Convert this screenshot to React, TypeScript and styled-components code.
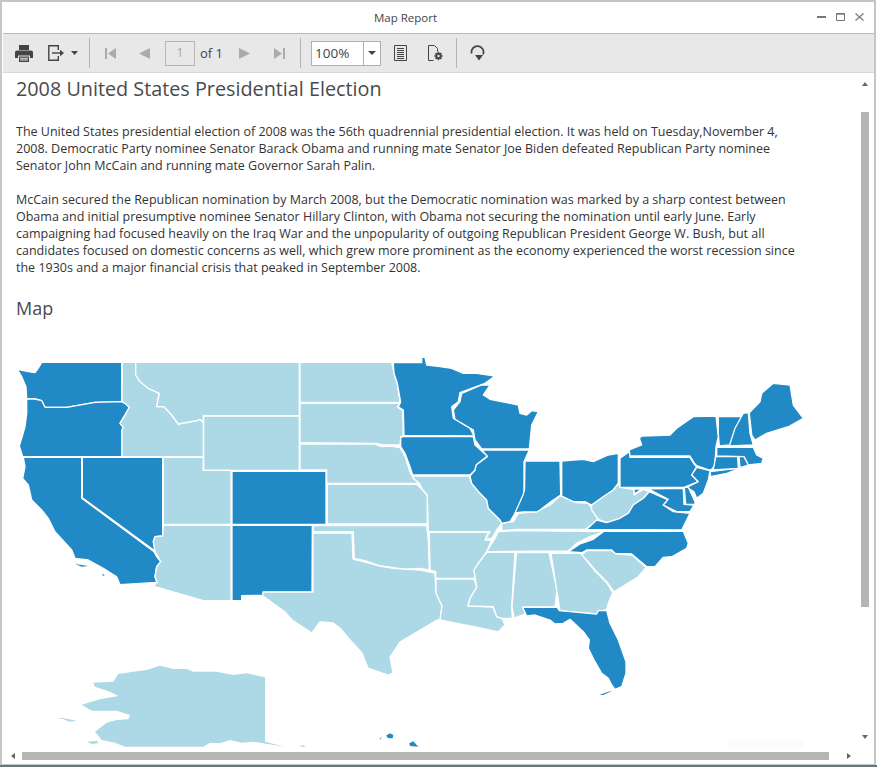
import React from "react";
import styled, { createGlobalStyle } from "styled-components";

const Global = createGlobalStyle`
  html, body { margin: 0; padding: 0; background: #fff; }
  body { font-family: "Open Sans", "Liberation Sans", sans-serif; }
`;

const BLUE = "#2289c7";
const LIGHT = "#add8e6";

const Win = styled.div`
  width: 876px;
  height: 765px;
  box-sizing: border-box;
  background: #fff;
  border: 2px solid #c6c6c6;
  border-bottom-width: 1px;
  padding-left: 1px;
  display: flex;
  flex-direction: column;
  overflow: hidden;
`;
const DesktopStrip = styled.div`
  height: 2px;
  background: #66767c;
`;
const TitleBar = styled.div`
  height: 31px;
  flex: none;
  display: flex;
  align-items: center;
  justify-content: center;
  position: relative;
  font-size: 11.5px;
  color: #444;
  padding-right: 66px;
  box-sizing: border-box;
`;
const WinControls = styled.div`
  position: absolute;
  right: 10px;
  top: 11px;
  display: flex;
  gap: 10px;
  align-items: center;
`;
const Toolbar = styled.div`
  height: 40px;
  flex: none;
  box-sizing: border-box;
  background: #e8e8e8;
  border-top: 1px solid #b9b9b9;
  border-bottom: 1px solid #d8d8d8;
  display: flex;
  align-items: center;
  padding-left: 4px;
`;
const ToolButton = styled.div<{ $w?: number; $ml?: number }>`
  width: ${(p) => p.$w ?? 34}px;
  margin-left: ${(p) => p.$ml ?? 0}px;
  height: 30px;
  flex: none;
  display: flex;
  align-items: center;
  justify-content: center;
  gap: 7px;
`;
const Separator = styled.div<{ $ml: number }>`
  width: 1px;
  height: 30px;
  background: #b4b4b4;
  margin-left: ${(p) => p.$ml}px;
  flex: none;
`;
const PageInput = styled.div`
  width: 30px;
  height: 25px;
  margin-left: 4px;
  box-sizing: border-box;
  border: 1px solid #b5b5b5;
  flex: none;
  display: flex;
  align-items: center;
  justify-content: center;
  font-size: 13px;
  color: #a8a8a8;
  padding-bottom: 3px;
`;
const OfLabel = styled.div`
  margin-left: 5px;
  width: 27px;
  flex: none;
  font-size: 13px;
  color: #444;
  white-space: nowrap;
`;
const ZoomCombo = styled.div`
  width: 70px;
  height: 25px;
  margin-left: 10px;
  box-sizing: border-box;
  border: 1px solid #b0b0b0;
  background: #fff;
  flex: none;
  display: flex;
  align-items: stretch;
`;
const ZoomValue = styled.div`
  flex: 1;
  font-size: 13.5px;
  color: #444;
  padding-left: 3px;
  line-height: 23px;
`;
const ZoomDrop = styled.div`
  width: 16px;
  border-left: 1px solid #b0b0b0;
  display: flex;
  align-items: center;
  justify-content: center;
`;
const Body = styled.div`
  flex: 1;
  min-height: 0;
  display: grid;
  grid-template-columns: 1fr 17px;
  grid-template-rows: 1fr 14px;
`;
const Viewport = styled.div`
  overflow: hidden;
  min-width: 0;
  min-height: 0;
  padding-left: 13px;
`;
const ReportTitle = styled.h1`
  margin: 2px 0 0;
  font-weight: 400;
  font-size: 19.8px;
  line-height: 28px;
  color: #4a4a4a;
  white-space: nowrap;
`;
const Paragraphs = styled.div`
  margin-top: 20px;
  font-size: 12.5px;
  line-height: 17px;
  color: #333;
`;
const Para = styled.div`
  margin-bottom: 17px;
`;
const Line = styled.div`
  white-space: nowrap;
`;
const SectionTitle = styled.h2`
  margin: 19px 0 0;
  font-weight: 400;
  font-size: 18px;
  line-height: 26px;
  color: #4a4a4a;
`;
const MapSvg = styled.svg`
  display: block;
  margin: 1px 0 0 -13px;
`;
const VScroll = styled.div`
  display: flex;
  flex-direction: column;
  align-items: center;
  padding-right: 1px;
`;
const VThumb = styled.div`
  width: 8px;
  height: 495px;
  background: #b5b5b5;
  margin-top: 28px;
`;
const ArrowUp = styled.div`
  margin-top: 7px;
  height: 4px;
  line-height: 0;
`;
const ArrowDown = styled.div`
  margin-top: auto;
  margin-bottom: 11px;
  line-height: 0;
`;
const HScroll = styled.div`
  display: flex;
  align-items: center;
  padding: 0 0 2px 8px;
`;
const HThumb = styled.div`
  width: 807px;
  height: 8px;
  background: #b5b5b5;
  margin-left: 7px;
`;
const ArrowRight = styled.div`
  margin-left: 18px;
  line-height: 0;
`;
const Corner = styled.div``;

type S = { f: string; o?: [number, number]; p: string };
const Z4: [number, number] = [0, 350];
const Z5: [number, number] = [270, 350];
const Z6: [number, number] = [540, 370];
const Z7: [number, number] = [0, 620];
const ZFL: [number, number] = [500, 590];
const ZKY: [number, number] = [470, 490];

const states: S[] = [
  { f: BLUE, o: Z4, p: "125,37 118,50 105,68 85,65 52,58 65,80 78,110 80,147 105,147 125,152 135,172 160,172 200,172 285,157 365,155 365,37" },
  { f: BLUE, o: Z4, p: "80,147 105,147 125,152 135,172 200,172 285,157 365,155 375,160 388,172 378,190 360,220 370,232 366,240 366,320 68,320 58,288 65,265 75,230 80,190" },
  { f: LIGHT, o: Z4, p: "367,37 407,37 407,75 420,95 445,115 478,130 470,170 492,170 515,195 535,222 590,212 600,208 610,218 610,320 366,320 366,240 370,232 360,220 378,190 388,172 375,160 366,155" },
  { f: LIGHT, o: Z4, p: "407,37 898,37 898,197 610,197 610,218 600,208 590,212 535,222 515,195 492,170 470,170 478,130 445,115 420,95 407,75" },
  { f: LIGHT, o: Z4, p: "611,198 898,198 898,361 611,361" },
  { f: LIGHT, o: Z4, p: "490,322 610,322 610,361 693,361 693,523 490,523" },
  { f: BLUE, o: Z4, p: "247,322 488,322 488,558 465,560 460,575 465,603 247,443" },
  { f: BLUE, o: Z4, p: "70,322 245,322 245,445 462,605 470,620 482,635 470,650 465,680 470,697 360,704 350,680 310,655 265,630 225,625 215,600 165,545 145,505 125,480 95,450 85,405 68,385 75,350" },
  { f: LIGHT, o: Z4, p: "490,526 693,526 693,752 610,752 460,708 472,697 465,680 470,650 482,635 465,603 460,575 465,560 488,558" },
  { f: BLUE, o: Z4, p: "696,526 937,526 936,727 790,727 790,736 725,737 725,752 696,752" },
  { f: BLUE, o: Z4, p: "696,364 978,364 978,523 696,523" },
  { f: LIGHT, o: Z5, p: "90,37 365,37 372,70 382,100 390,157 90,157" },
  { f: LIGHT, o: Z5, p: "90,160 390,160 382,172 398,182 400,255 392,262 390,285 365,285 340,285 315,280 90,278" },
  { f: LIGHT, o: Z5, p: "90,282 312,282 335,290 362,288 390,293 405,320 420,365 430,385 448,400 170,400 170,360 90,360" },
  { f: LIGHT, o: Z5, p: "172,403 440,403 458,420 472,437 472,522 172,522" },
  { f: LIGHT, o: Z5, p: "130,527 470,527 475,570 478,660 450,655 400,658 365,652 330,648 285,632 253,625 250,545 130,545" },
  { f: LIGHT, p: "313,533 352,533 353,559 365,562 380,566 392,568 403,569 420,570 435,573 436,593 442,606 440,620 437,620 400,642 390,657 393,673 388,675 368,668 362,653 350,640 340,628 333,623 320,622 312,633 292,620 285,612 263,596 263,592 313,592" },
  { f: LIGHT, o: Z5, p: "430,378 598,378 605,400 630,430 650,450 655,475 690,510 695,520 680,540 665,565 645,568 660,545 475,545 472,435 458,420 448,400 430,385" },
  { f: LIGHT, o: Z5, p: "478,547 655,547 645,570 665,570 650,605 625,640 612,660 615,685 497,685 497,665 480,660" },
  { f: LIGHT, p: "436,579 474,579 477,587 470,598 468,606 493,607 497,617 502,618 505,625 498,632 480,628 465,625 440,620 442,606 436,593" },
  { f: LIGHT, o: Z5, p: "650,607 735,607 725,770 727,805 695,805 680,800 670,770 595,768 600,745 620,712 612,660 625,640" },
  { f: LIGHT, p: "516.5,552.5 549,552.5 557,590 555,607 523,607 525,614 514,618 512,606" },
  { f: LIGHT, o: ZKY, p: "85,125 140,122 405,125 360,140 320,160 295,183 50,185 65,160 75,145" },
  { f: LIGHT, o: ZKY, p: "95,100 130,95 145,70 200,65 240,45 270,18 320,38 355,40 365,55 385,90 345,118 140,118 95,122" },
  { f: BLUE, o: Z5, p: "640,300 778,300 762,335 762,430 748,470 735,490 720,515 695,520 690,510 655,475 650,450 630,430 605,400 600,378 615,360 618,345 652,320 635,300" },
  { f: BLUE, p: "525,461 560,461 560.7,495 551.7,501 540,510 536.7,512 523,512 515,513 523,495 524.5,490" },
  { f: BLUE, o: Z5, p: "400,260 610,260 615,285 652,318 618,345 615,360 600,375 428,375 420,350 405,310 392,290 392,262" },
  { f: BLUE, o: Z5, p: "370,38 455,38 455,22 465,22 470,45 510,50 545,55 580,70 620,70 675,78 645,100 570,128 565,155 545,170 550,205 600,235 612,258 402,256 400,180 385,170 392,157 382,100 372,70" },
  { f: BLUE, o: Z5, p: "635,105 660,105 640,135 660,148 745,165 750,190 770,195 785,182 805,185 785,225 778,297 635,297 615,270 610,240 555,208 550,180 570,155 575,130" },
  { f: BLUE, o: Z6, p: "65,273 130,268 160,275 205,255 235,250 235,340 220,360 190,380 155,405 135,395 100,395 65,378" },
  { f: LIGHT, o: Z6, p: "235,340 240,352 280,358 283,375 310,358 328,365 310,385 280,405 265,430 240,445 200,458 175,448 155,420 155,405 190,380 220,360" },
  { f: BLUE, o: Z6, p: "170,450 200,458 240,445 265,430 280,405 310,385 328,365 350,375 385,390 370,405 400,425 450,430 425,480 140,478" },
  { f: BLUE, o: Z6, p: "192,484 430,484 445,520 440,535 395,560 370,562 345,590 320,590 275,552 225,550 215,540 140,540 125,548 85,545 120,522 160,508" },
  { f: LIGHT, o: Z6, p: "122,557 140,542 215,542 228,552 275,555 318,592 295,620 222,665 200,635 165,600 140,570" },
  { f: LIGHT, o: Z6, p: "33,550 122,550 140,572 165,603 200,638 218,668 205,700 200,718 178,725 172,735 60,722 50,660" },
  { f: BLUE, o: ZFL, p: "68,52 172,52 178,62 290,72 295,62 320,62 330,100 355,150 378,215 378,250 365,290 345,298 335,285 325,265 305,250 285,215 265,175 268,150 250,125 210,88 190,100 165,102 150,90 105,75 80,78" },
  { f: BLUE, o: Z6, p: "240,352 240,265 268,245 270,262 450,262 462,282 470,290 455,315 475,335 432,352" },
  { f: BLUE, o: Z6, p: "270,258 268,240 305,225 298,205 305,198 390,195 410,175 460,140 528,138 535,200 528,230 525,285 515,298 508,300 470,287 462,278 450,258" },
  { f: BLUE, o: Z6, p: "510,305 590,295 600,295 560,310 512,320" },
  { f: BLUE, o: Z6, p: "470,292 510,302 505,330 490,370 470,385 462,365 440,352 475,335 455,315" },
  { f: BLUE, o: Z6, p: "433,352 445,352 465,395 465,403 437,403" },
  { f: BLUE, o: Z6, p: "282,357 430,355 432,403 462,405 450,425 410,425 370,405 385,388 350,370 328,358 310,355 283,372" },
  { f: BLUE, o: Z6, p: "535,140 608,140 590,175 570,225 538,228 535,190" },
  { f: BLUE, o: Z6, p: "610,130 625,128 630,190 640,225 568,228 585,175" },
  { f: BLUE, o: Z6, p: "628,128 660,95 665,70 700,40 750,45 760,105 790,145 745,170 680,190 645,210 635,195" },
  { f: BLUE, o: Z6, p: "530,232 640,232 650,255 670,265 665,280 625,285 612,260 530,258" },
  { f: BLUE, o: Z6, p: "527,260 593,260 595,295 520,300" },
  { f: BLUE, o: Z6, p: "597,260 612,260 625,285 600,293" },
];

const unstroked: S[] = [
  { f: LIGHT, o: Z7, p: "795,172 740,160 700,165 650,155 580,155 560,147 520,147 480,137 440,150 400,155 355,162 340,185 280,188 285,200 330,215 355,228 300,238 245,254 275,272 350,272 390,285 385,298 350,300 320,308 285,335 305,360 345,368 375,380 610,380 630,368 660,370 690,360 725,368 760,365 855,380 795,365" },
  { f: LIGHT, o: Z7, p: "168,293 190,295 230,302 210,305 190,298" },
  { f: LIGHT, o: Z7, p: "262,365 290,362 295,370 275,372" },
  { f: LIGHT, o: Z7, p: "898,380 910,375 917,380" },
  { f: BLUE, o: Z7, p: "1158,347 1170,340 1180,345 1178,355 1165,355" },
  { f: BLUE, o: Z7, p: "1138,358 1145,350 1142,358" },
  { f: BLUE, o: Z7, p: "1228,370 1240,364 1255,380 1230,378" },
  { f: BLUE, o: ZFL, p: "298,315 325,305 338,302 310,315" },
  { f: BLUE, o: Z4, p: "225,642 245,645 265,648 245,650" },
  { f: BLUE, o: Z4, p: "305,672 315,675 310,678" },
];

const toPoints = (s: S) => {
  const [ox, oy] = s.o ?? [0, 0];
  const k = s.o ? 3 : 1;
  return s.p
    .split(" ")
    .map((pt) => {
      const [x, y] = pt.split(",").map(Number);
      return `${(ox + x / k).toFixed(1)},${(oy + y / k).toFixed(1)}`;
    })
    .join(" ");
};

const USMap = () => (
  <MapSvg width={857} height={426} viewBox="3 322 857 426">
    <rect x={729} y={740} width={75} height={7} fill="#fbfbfb" />
    {states.map((s, i) => (
      <polygon key={i} points={toPoints(s)} fill={s.f} stroke="#fff" strokeWidth={1.3} strokeLinejoin="round" />
    ))}
    {unstroked.map((s, i) => (
      <polygon key={i} points={toPoints(s)} fill={s.f} />
    ))}
  </MapSvg>
);

const DARK = "#444";
const DIS = "#ababab";

const Printer = () => (
  <svg width="18" height="17" viewBox="0 0 18 17">
    <path fill={DARK} d="M4 0h10v5H4zM2 5.5h14a2 2 0 0 1 2 2V13h-3v-2.5H3V13H0V7.5a2 2 0 0 1 2-2z" />
    <path fill={DARK} d="M4 11.5h10V17H4z" />
    <path fill="#e8e8e8" d="M5 12.8h8v1H5zM5 14.6h8v1H5z" />
  </svg>
);
const ExportIcon = () => (
  <svg width="16" height="16" viewBox="0 0 16 16" fill="none" stroke={DARK} strokeWidth="1.4">
    <path d="M10.3 5V.8H.8v14.4h9.5V11" />
    <path d="M4 8h9" />
    <path fill={DARK} stroke="none" d="M12 4.8 16 8l-4 3.2z" />
  </svg>
);
const Caret = () => (
  <svg width="7" height="4" viewBox="0 0 7 4"><path fill={DARK} d="M0 0h7L3.5 4z" /></svg>
);
const First = () => (
  <svg width="11" height="11" viewBox="0 0 11 11">
    <path fill={DIS} d="M0 0h2v11H0zM11 0v11L3 5.5z" />
  </svg>
);
const Prev = () => (
  <svg width="11" height="11" viewBox="0 0 11 11"><path fill={DIS} d="M11 0v11L0 5.5z" /></svg>
);
const Next = () => (
  <svg width="11" height="11" viewBox="0 0 11 11"><path fill={DIS} d="M0 0v11l11-5.5z" /></svg>
);
const Last = () => (
  <svg width="11" height="11" viewBox="0 0 11 11">
    <path fill={DIS} d="M9 0h2v11H9zM0 0v11l8-5.5z" />
  </svg>
);
const PageList = () => (
  <svg width="13" height="16" viewBox="0 0 13 16" fill="none" stroke={DARK}>
    <path d="M.5.5h12v15H.5z" />
    <path d="M3 3.5h7M3 5.5h7M3 7.5h7M3 9.5h7M3 11.5h7M3 13.5h7" />
  </svg>
);
const PageGear = () => (
  <svg width="15" height="16" viewBox="0 0 15 16" fill="none" stroke={DARK}>
    <path d="M5.5 15.5h-5V.5h6l3 3v3" />
    <circle cx="10.5" cy="11" r="2.2" strokeWidth="2" />
    <path strokeWidth="1.4" d="M10.5 6.8v1.4M10.5 13.8v1.4M6.3 11h1.4M13.3 11h1.4M7.6 8.1l1 1M12.4 12.9l1 1M7.6 13.9l1-1M12.4 9.1l1-1" />
  </svg>
);
const Refresh = () => (
  <svg width="15" height="16" viewBox="0 0 15 16" fill="none">
    <path stroke={DARK} strokeWidth="1.7" d="M1.7 8.5A6 6 0 1 1 13 9.5" />
    <path fill={DARK} d="M5 10h8l-4 5.5z" />
  </svg>
);
const TriDown = () => (
  <svg width="8" height="4" viewBox="0 0 8 4"><path fill={DARK} d="M0 0h8L4 4z" /></svg>
);

const Tri = ({ d, c = "#666", w = 6, h = 4 }: { d: string; c?: string; w?: number; h?: number }) => (
  <svg width={w} height={h} viewBox={`0 0 ${w} ${h}`}><path fill={c} d={d} /></svg>
);

const text1 = [
  "The United States presidential election of 2008 was the 56th quadrennial presidential election. It was held on Tuesday,November 4,",
  "2008. Democratic Party nominee Senator Barack Obama and running mate Senator Joe Biden defeated Republican Party nominee",
  "Senator John McCain and running mate Governor Sarah Palin.",
];
const text2 = [
  "McCain secured the Republican nomination by March 2008, but the Democratic nomination was marked by a sharp contest between",
  "Obama and initial presumptive nominee Senator Hillary Clinton, with Obama not securing the nomination until early June. Early",
  "campaigning had focused heavily on the Iraq War and the unpopularity of outgoing Republican President George W. Bush, but all",
  "candidates focused on domestic concerns as well, which grew more prominent as the economy experienced the worst recession since",
  "the 1930s and a major financial crisis that peaked in September 2008.",
];

export default function App() {
  return (
    <>
      <Global />
      <Win>
        <TitleBar>
          Map Report
          <WinControls>
            <svg width="9" height="2" viewBox="0 0 9 2"><path fill="#777" d="M0 0h9v2H0z" /></svg>
            <svg width="9" height="8" viewBox="0 0 9 8" fill="none" stroke="#777"><path d="M.5.5h8v7h-8z" /><path d="M0 1h9" strokeWidth="1.4" /></svg>
            <svg width="9" height="8" viewBox="0 0 9 8" fill="none" stroke="#888" strokeWidth="1.5"><path d="M.5.5l8 7M8.5.5l-8 7" /></svg>
          </WinControls>
        </TitleBar>
        <Toolbar>
          <ToolButton><Printer /></ToolButton>
          <ToolButton $w={43}><ExportIcon /><Caret /></ToolButton>
          <Separator $ml={5} />
          <ToolButton $ml={3}><First /></ToolButton>
          <ToolButton><Prev /></ToolButton>
          <PageInput>1</PageInput>
          <OfLabel>of 1</OfLabel>
          <ToolButton><Next /></ToolButton>
          <ToolButton $ml={1}><Last /></ToolButton>
          <Separator $ml={4} />
          <ZoomCombo>
            <ZoomValue>100%</ZoomValue>
            <ZoomDrop><TriDown /></ZoomDrop>
          </ZoomCombo>
          <ToolButton $ml={2}><PageList /></ToolButton>
          <ToolButton $ml={1}><PageGear /></ToolButton>
          <Separator $ml={4} />
          <ToolButton $ml={3}><Refresh /></ToolButton>
        </Toolbar>
        <Body>
          <Viewport>
            <ReportTitle>2008 United States Presidential Election</ReportTitle>
            <Paragraphs>
              <Para>{text1.map((l) => <Line key={l}>{l}</Line>)}</Para>
              <Para>{text2.map((l) => <Line key={l}>{l}</Line>)}</Para>
            </Paragraphs>
            <SectionTitle>Map</SectionTitle>
            <USMap />
          </Viewport>
          <VScroll>
            <ArrowUp><Tri d="M3 0l3 4H0z" /></ArrowUp>
            <VThumb />
            <ArrowDown><Tri d="M0 0h6L3 4z" /></ArrowDown>
          </VScroll>
          <HScroll>
            <Tri w={4} h={6} d="M4 0v6L0 3z" />
            <HThumb />
            <ArrowRight><Tri w={4} h={6} d="M0 0v6l4-3z" /></ArrowRight>
          </HScroll>
          <Corner />
        </Body>
      </Win>
      <DesktopStrip />
    </>
  );
}
